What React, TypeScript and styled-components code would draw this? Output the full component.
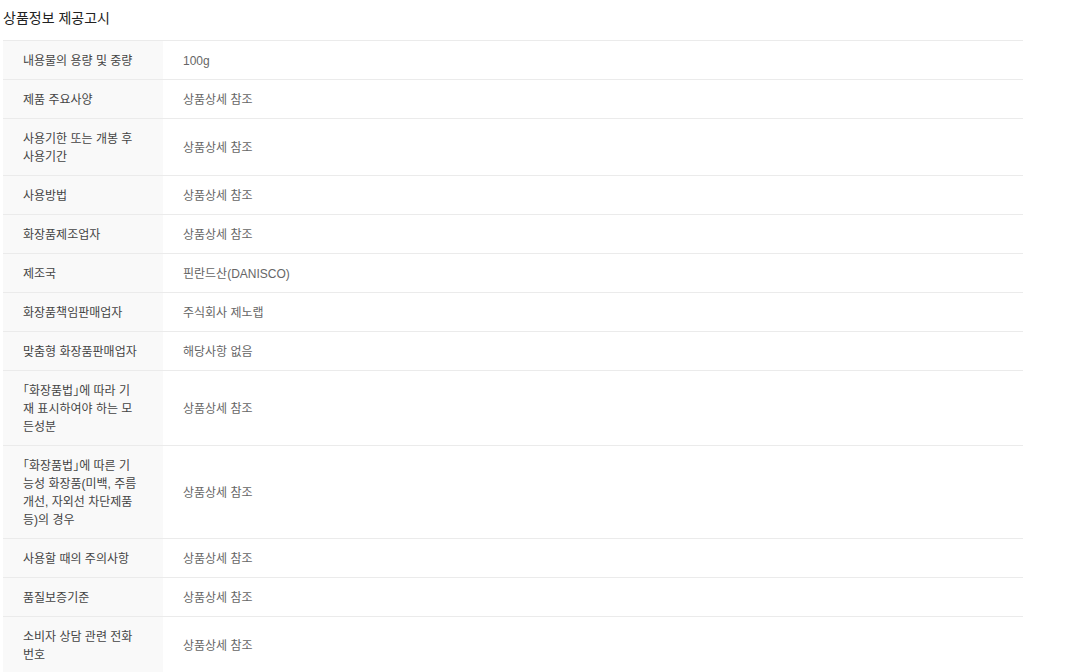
import React from 'react'
import styled, { createGlobalStyle } from 'styled-components'

const GlobalStyle = createGlobalStyle`
  html, body {
    margin: 0;
    padding: 0;
    background: #fff;
  }
  body {
    font-family: 'Liberation Sans', 'Noto Sans CJK KR', sans-serif;
  }
`

const Wrapper = styled.section`
  width: 1020px;
  padding: 8px 0 0 3px;
`
const Title = styled.h3`
  margin: 0 0 11px 0;
  font: 400 14px/21px 'Liberation Sans', 'Noto Sans CJK KR', sans-serif;
  color: #222;
`
const Table = styled.table`
  width: 100%;
  border-collapse: collapse;
  table-layout: fixed;
  font-size: 12px;
  line-height: 18px;
  font-feature-settings: 'halt';
`
const Row = styled.tr`
  border-top: 1px solid #ebebeb;
`
const Label = styled.th`
  width: 160px;
  box-sizing: border-box;
  padding: 11px 10px 9px 20px;
  background: #f9f9f9;
  color: #444;
  font-weight: 400;
  text-align: left;
  vertical-align: middle;
  white-space: pre-line;
  word-break: keep-all;
`
const Value = styled.td`
  padding: 11px 20px 9px;
  color: #666;
  vertical-align: middle;
`

// line breaks follow the narrow label column of the original page
const rows: [string, string][] = [
  ['내용물의 용량 및 중량', '100g'],
  ['제품 주요사양', '상품상세 참조'],
  ['사용기한 또는 개봉 후\n사용기간', '상품상세 참조'],
  ['사용방법', '상품상세 참조'],
  ['화장품제조업자', '상품상세 참조'],
  ['제조국', '핀란드산(DANISCO)'],
  ['화장품책임판매업자', '주식회사 제노랩'],
  ['맞춤형 화장품판매업자', '해당사항 없음'],
  ['「화장품법」에 따라 기\n재 표시하여야 하는 모\n든성분', '상품상세 참조'],
  ['「화장품법」에 따른 기\n능성 화장품(미백, 주름\n개선, 자외선 차단제품\n등)의 경우', '상품상세 참조'],
  ['사용할 때의 주의사항', '상품상세 참조'],
  ['품질보증기준', '상품상세 참조'],
  ['소비자 상담 관련 전화\n번호', '상품상세 참조'],
]

const App = () => {
  return (
    <>
      <GlobalStyle />
      <Wrapper>
        <Title>상품정보 제공고시</Title>
        <Table>
          <tbody>
            {rows.map(([label, value]) => (
              <Row key={label}>
                <Label scope="row">{label}</Label>
                <Value>{value}</Value>
              </Row>
            ))}
          </tbody>
        </Table>
      </Wrapper>
    </>
  )
}

export default App
